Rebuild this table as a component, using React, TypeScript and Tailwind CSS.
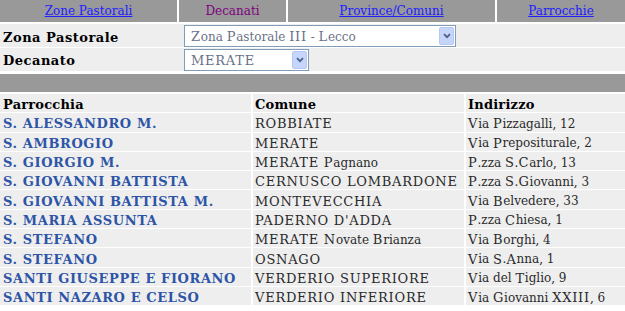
import React from "react";

const rows: [string, string, string][] = [
  ["S. ALESSANDRO M.", "ROBBIATE", "Via Pizzagalli, 12"],
  ["S. AMBROGIO", "MERATE", "Via Prepositurale, 2"],
  ["S. GIORGIO M.", "MERATE Pagnano", "P.zza S.Carlo, 13"],
  ["S. GIOVANNI BATTISTA", "CERNUSCO LOMBARDONE", "P.zza S.Giovanni, 3"],
  ["S. GIOVANNI BATTISTA M.", "MONTEVECCHIA", "Via Belvedere, 33"],
  ["S. MARIA ASSUNTA", "PADERNO D'ADDA", "P.zza Chiesa, 1"],
  ["S. STEFANO", "MERATE Novate Brianza", "Via Borghi, 4"],
  ["S. STEFANO", "OSNAGO", "Via S.Anna, 1"],
  ["SANTI GIUSEPPE E FIORANO", "VERDERIO SUPERIORE", "Via del Tiglio, 9"],
  ["SANTI NAZARO E CELSO", "VERDERIO INFERIORE", "Via Giovanni XXIII, 6"],
];

// Georgia capitals are wider than DejaVu Serif's: widen uppercase runs.
function Caps({ text }: { text: string }) {
  const parts = text.split(/([A-Z][A-Z' ]*[A-Z]|[A-Z])/);
  return (
    <>
      {parts.map((p, i) =>
        /^[A-Z]/.test(p) ? (
          <span key={i} className="text-[13px] tracking-[0.75px]">{p}</span>
        ) : (
          <span key={i}>{p}</span>
        )
      )}
    </>
  );
}

function Arrow() {
  return (
    <div className="flex h-full w-[15px] items-center justify-center rounded-[2px] border border-[#b5c8f2] bg-[#c6d5fb]">
      <svg width="8" height="6" viewBox="0 0 8 6">
        <path d="M1 1.2 L4 4.2 L7 1.2" fill="none" stroke="#4d6185" strokeWidth="1.8" />
      </svg>
    </div>
  );
}

function FakeSelect({ text, width }: { text: string; width: string }) {
  return (
    <div className={`flex h-[22px] ${width} items-stretch border border-[#7f9db9] bg-white p-[1px]`}>
      <div className="flex flex-1 items-center whitespace-pre pl-[5px] pt-[2px] text-[#6b7186]">
        <Caps text={text} />
      </div>
      <Arrow />
    </div>
  );
}

const cell = "flex items-center whitespace-pre bg-[#eeeeee] pt-[3px]";

export default function App() {
  return (
    <div className="h-[311px] w-[625px] overflow-hidden bg-white font-['DejaVu_Serif',serif] text-[12px] leading-none text-black">
      <div className="grid h-[22px] grid-cols-[177px_107px_207px_1fr] gap-x-[2px]">
        <div className="flex items-center justify-center bg-[#999999]"><span className="text-[#2020ff] underline">Zone Pastorali</span></div>
        <div className="flex items-center justify-center bg-[#999999]"><span className="text-[#800080]">Decanati</span></div>
        <div className="flex items-center justify-center bg-[#999999]"><span className="text-[#2020ff] underline">Province/Comuni</span></div>
        <div className="flex items-center justify-center bg-[#999999]"><span className="text-[#2020ff] underline">Parrocchie</span></div>
      </div>
      <div className="mt-[2px] flex h-[23px] items-center bg-[#eeeeee]">
        <div className="w-[184px] pl-[3px] pt-[3px] text-[13px] font-bold tracking-[0.5px]">Zona Pastorale</div>
        <FakeSelect text="Zona Pastorale III - Lecco" width="w-[272px]" />
      </div>
      <div className="mt-[1px] flex h-[23px] items-center bg-[#eeeeee]">
        <div className="w-[184px] pl-[3px] pt-[2px] text-[13px] font-bold tracking-[0.5px]">Decanato</div>
        <FakeSelect text="MERATE" width="w-[125px]" />
      </div>
      <div className="mt-[3px] h-[18px] bg-[#999999]" />
      <div className="mt-[2px] grid grid-cols-[251px_211px_1fr] auto-rows-[18.3px] gap-x-[2px] gap-y-[1px]">
        <div className={`${cell} pl-[3px] text-[13px] font-bold tracking-[0.2px]`}>Parrocchia</div>
        <div className={`${cell} pl-[2px] text-[13px] font-bold tracking-[0.2px]`}>Comune</div>
        <div className={`${cell} pl-[2px] text-[13px] font-bold tracking-[0.2px]`}>Indirizzo</div>
        {rows.map((r, i) => (
          <React.Fragment key={i}>
            <div className={`${cell} pl-[3px] text-[13px] font-bold tracking-[0.6px] text-[#2d54a6]`}>{r[0]}</div>
            <div className={`${cell} pl-[2px] text-[#2a2a2a]`}><Caps text={r[1]} /></div>
            <div className={`${cell} pl-[2px] text-[#2a2a2a]`}><Caps text={r[2]} /></div>
          </React.Fragment>
        ))}
      </div>
    </div>
  );
}
